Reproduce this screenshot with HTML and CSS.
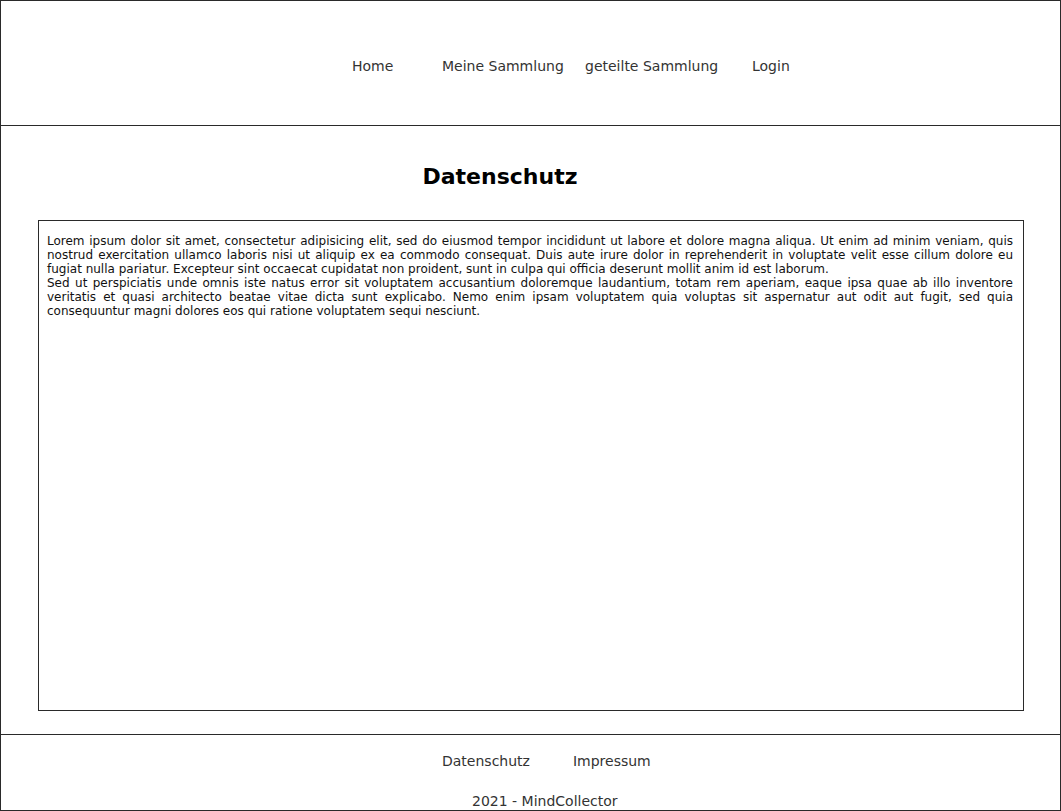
FILE: index.html
```html
<!DOCTYPE html>
<html lang="de">
<head>
<meta charset="utf-8">
<title>Datenschutz</title>
<link rel="stylesheet" href="styles.css">
</head>
<body>
<div class="frame">
  <header class="header">
    <nav class="nav">
      <a class="nav-item" href="#">Home</a>
      <a class="nav-item" href="#">Meine Sammlung</a>
      <a class="nav-item" href="#">geteilte Sammlung</a>
      <a class="nav-item" href="#">Login</a>
    </nav>
  </header>
  <main class="main">
    <h1 class="title">Datenschutz</h1>
    <section class="textbox">
      <p class="para">Lorem ipsum dolor sit amet, consectetur adipisicing elit, sed do eiusmod tempor incididunt ut labore et dolore magna aliqua. Ut enim ad minim veniam, quis nostrud exercitation ullamco laboris nisi ut aliquip ex ea commodo consequat. Duis aute irure dolor in reprehenderit in voluptate velit esse cillum dolore eu fugiat nulla pariatur. Excepteur sint occaecat cupidatat non proident, sunt in culpa qui officia deserunt mollit anim id est laborum.</p>
      <p class="para">Sed ut perspiciatis unde omnis iste natus error sit voluptatem accusantium doloremque laudantium, totam rem aperiam, eaque ipsa quae ab illo inventore veritatis et quasi architecto beatae vitae dicta sunt explicabo. Nemo enim ipsam voluptatem quia voluptas sit aspernatur aut odit aut fugit, sed quia consequuntur magni dolores eos qui ratione voluptatem sequi nesciunt.</p>
    </section>
  </main>
  <footer class="footer">
    <div class="footer-links">
      <a class="footer-link" href="#">Datenschutz</a>
      <a class="footer-link" href="#">Impressum</a>
    </div>
    <div class="copyright">2021 - MindCollector</div>
  </footer>
</div>
</body>
</html>
```
FILE: styles.css
```css
html, body {
  margin: 0;
  padding: 0;
  background: #fff;
}
body {
  font-family: "DejaVu Sans", Verdana, sans-serif;
  color: #222;
}
.frame {
  width: 1061px;
  height: 811px;
  box-sizing: border-box;
  border: 1px solid #2a2a2a;
  display: flex;
  flex-direction: column;
  overflow: hidden;
}
.header {
  height: 125px;
  flex: none;
  box-sizing: border-box;
  border-bottom: 1px solid #2a2a2a;
}
.nav {
  display: grid;
  grid-template-columns: 90px 143px 167px auto;
  padding: 57px 0 0 351px;
}
.nav-item {
  font-size: 14px;
  line-height: 17px;
  color: #333;
  text-decoration: none;
  white-space: nowrap;
}
.main {
  height: 609px;
  flex: none;
  box-sizing: border-box;
  border-bottom: 1px solid #2a2a2a;
  padding: 0 36px 0 37px;
}
.title {
  margin: 0;
  padding: 39px 62px 0 0;
  height: 94px;
  box-sizing: border-box;
  text-align: center;
  font-size: 22px;
  line-height: 24px;
  font-weight: bold;
  color: #000;
}
.textbox {
  height: 491px;
  box-sizing: border-box;
  border: 1px solid #2a2a2a;
  padding: 13px 10px 0 8px;
}
.para {
  margin: 0;
  font-size: 12px;
  line-height: 14px;
  text-align: justify;
  color: #111;
}
.footer {
  flex: 1;
  display: flex;
  flex-direction: column;
}
.footer-links {
  display: flex;
  gap: 43px;
  padding: 18px 0 0 441px;
}
.footer-link {
  font-size: 14px;
  line-height: 17px;
  color: #333;
  text-decoration: none;
}
.copyright {
  margin-top: 23px;
  padding-left: 471px;
  font-size: 14px;
  line-height: 17px;
  color: #333;
}
```
